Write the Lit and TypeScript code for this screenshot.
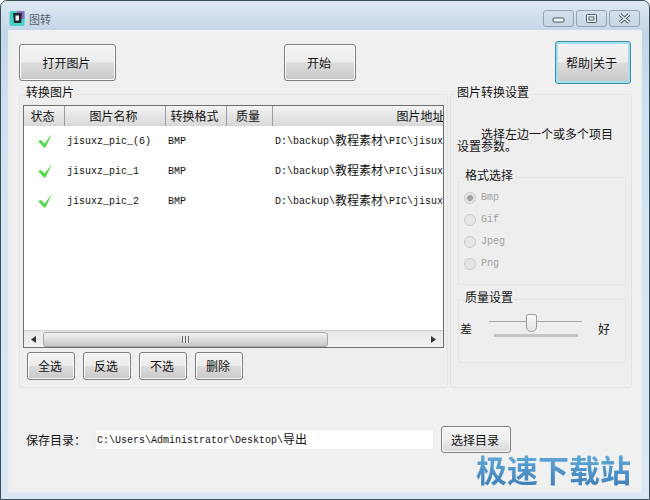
import { LitElement, html, css } from "lit";
import { customElement } from "lit/decorators.js";

const CJK = /([\u3000-\u9fff]+)/;
const mixed = (text: string) =>
  text.split(CJK).map((part) => (CJK.test(part) ? html`<span class="cjk">${part}</span>` : part));

const rows = [
  ["jisuxz_pic_(6)", "D:\\backup\\教程素材\\PIC\\jisuxz_pic_(6).bmp"],
  ["jisuxz_pic_1", "D:\\backup\\教程素材\\PIC\\jisuxz_pic_1.bmp"],
  ["jisuxz_pic_2", "D:\\backup\\教程素材\\PIC\\jisuxz_pic_2.bmp"],
];

@customElement("app-root")
export class AppRoot extends LitElement {
  static styles = css`
    :host {
      display: block;
      width: 650px;
      height: 500px;
      font: 12px "Noto Sans CJK SC", sans-serif;
      color: #111;
      background: #fff;
    }
    * { box-sizing: border-box; }
    .cjk { font: 12px/12px "Noto Sans CJK SC", sans-serif; position: relative; top: 1px; }
    .mono { font: 10px/12px "Liberation Mono", "Noto Sans CJK SC", monospace; white-space: nowrap; }

    .wrap { position: relative; width: 650px; height: 500px; }
    .frame {
      width: 650px;
      height: 500px;
      display: flex;
      flex-direction: column;
      padding: 0 7px 6px 7px;
      border: 1px solid #3a4f58;
      border-radius: 7px 7px 0 0;
      background: linear-gradient(180deg, #dfe9f2 0, #c3d6e8 30px, #cfe1f2 120px, #dbe8f4 100%);
    }
    .title { height: 29px; flex: none; display: flex; align-items: flex-start; }
    .logo { width: 16px; height: 16px; margin: 9px 0 0 1px; }
    .title-text { margin: 11px 0 0 4px; font-size: 11px; line-height: 14px; color: #5a6068; }
    .ctl { margin-left: auto; display: flex; gap: 2px; margin-top: 9px; margin-right: 2px; }
    .ctl span {
      width: 31px; height: 17px; display: flex; align-items: center; justify-content: center;
      border: 1px solid #93a3b6; border-radius: 3px;
      background: linear-gradient(180deg, #d5e0eb, #c6d5e4);
    }
    .ctl svg { width: 15px; height: 11px; }

    .content {
      flex: 1;
      background: #f0f0f0;
      padding-top: 11px;
      border: 1px solid #e8eef3;
      border-width: 0 1px 1px 1px;
    }
    .top { display: flex; align-items: center; height: 43px; }

    .btn {
      display: flex; align-items: center; justify-content: center;
      padding-right: 2px;
      border: 1px solid #7f7f7f;
      border-radius: 3px;
      background: linear-gradient(180deg, #f3f3f3 0, #ececec 48%, #dcdcdc 52%, #c8c8c8 100%);
      box-shadow: inset 0 0 0 1px #fbfbfb;
      font-size: 12px;
      line-height: 14px;
      color: #111;
    }
    .open { width: 97px; height: 37px; margin-left: 10px; }
    .start { width: 72px; height: 37px; margin-left: 168px; }
    .help {
      width: 76px; height: 43px; margin-left: 199px;
      border: 1px solid #3f8ba0;
      box-shadow: inset 0 0 0 2px #9ee0f2;
      padding-right: 3px;
    }

    .panels { display: flex; margin: 10px 0 0 10px; gap: 2px; }
    .group { position: relative; border: 1px solid #e3e3e3; border-radius: 3px; background: #eeeeee; }
    .group > .label {
      position: absolute; left: 5px; top: -10px; line-height: 13px; background: #f0f0f0; padding: 0 1px; white-space: nowrap;
    }
    .left { width: 429px; height: 294px; padding: 10px 3px 0 3px; }
    .right { width: 182px; height: 294px; padding: 0 6px 0 6px; }

    .table {
      width: 421px; height: 243px;
      border: 1px solid #6e6e6e;
      background: #fff;
      display: flex; flex-direction: column; overflow: hidden;
    }
    .head, .row { display: grid; grid-template-columns: 41px 101px 61px 46px 296px; flex: none; }
    .head { height: 20px; background: linear-gradient(180deg, #f4f4f4, #e4e4e4 55%, #d8d8d8); }
    .head div { text-align: center; line-height: 19px; border-right: 1px solid #9c9c9c; white-space: nowrap; padding-right: 3px; }
    .head div:last-child { padding-right: 0; }
    .row { height: 30px; align-items: center; }
    .row .name, .row .fmt { padding: 2px 0 0 2px; }
    .row .path { grid-column: 5; padding: 0 0 2px 2px; }
    .check { width: 16px; height: 16px; margin-left: 13px; }
    .spacer { flex: 1; }

    .scroll {
      height: 17px; flex: none; display: flex; align-items: center;
      background: linear-gradient(180deg, #e8e8e8, #f2f2f2);
      border-top: 1px solid #cfcfcf;
    }
    .arrow { width: 19px; height: 100%; display: flex; align-items: center; justify-content: center; flex: none; }
    .arrow svg { width: 5px; height: 7px; }
    .thumb {
      width: 285px; height: 15px;
      display: flex; align-items: center; justify-content: center;
      border: 1px solid #a8a8a8; border-radius: 3px;
      background: linear-gradient(180deg, #f2f2f2, #dcdcdc 50%, #c8c8c8);
    }
    .grip { width: 8px; height: 7px; background: repeating-linear-gradient(90deg, #666 0 1px, #e8e8e8 1px 3px); }
    .track { flex: 1; }

    .actions { display: flex; gap: 8px; margin: 4px 0 0 4px; }
    .actions .btn { width: 48px; height: 28px; }

    .hint { margin-top: 33px; line-height: 12px; }
    .hint .a { padding-left: 24px; }
    .sub { position: relative; width: 168px; margin-left: 1px; border: 1px solid #e4e4e4; border-radius: 3px; background: #eeeeee; }
    .sub > .label { position: absolute; left: 5px; top: -10px; line-height: 13px; background: #f0f0f0; padding: 0 1px; }
    .format { height: 108px; margin-top: 25px; padding: 9px 0 0 5px; }
    .radio { display: flex; align-items: center; height: 22px; gap: 5px; color: #a0a0a0; }
    .dot {
      width: 12px; height: 12px; border-radius: 50%;
      border: 1px solid #c8c8c8; background: #e6e6e6;
      display: flex; align-items: center; justify-content: center;
    }
    .dot.on::after { content: ""; width: 6px; height: 6px; border-radius: 50%; background: #a2a2a2; }
    .quality { height: 64px; margin-top: 14px; display: flex; align-items: flex-start; padding: 21px 0 0 1px; }
    .quality .word { line-height: 16px; }
    .slider { position: relative; width: 93px; height: 26px; margin: -7px 16px 0 17px; }
    .groove { position: absolute; left: 0; right: 0; top: 7px; height: 1px; background: #a8a8a8; }
    .handle {
      position: absolute; left: 37px; top: 0; width: 11px; height: 18px;
      border: 1px solid #9a9a9a; border-radius: 2px 2px 5px 5px;
      background: linear-gradient(180deg, #fafafa, #e2e2e2);
    }
    .ticks { position: absolute; left: 5px; right: 4px; top: 20px; height: 3px; background: #c4c4c4; }

    .save { display: flex; align-items: center; margin: 38px 0 0 17px; height: 27px; }
    .save .cap { width: 69px; }
    .input { width: 339px; height: 21px; background: #fff; border: 1px solid #ececec; padding-left: 1px; line-height: 21px; }
    .save .btn { width: 70px; height: 27px; margin-left: 7px; background: linear-gradient(180deg, #f6f6f6, #eeeeee 48%, #d8d8d8); }

    .watermark {
      position: absolute; left: 476px; top: 451px;
      font: 700 31px/36px "Noto Sans CJK SC", sans-serif;
      white-space: nowrap;
      background: linear-gradient(180deg, #62aedd, #3f7fb8);
      -webkit-background-clip: text; background-clip: text; color: transparent;
    }
  `;

  render() {
    return html`<div class="wrap"><div class="frame">
      <div class="title">
        <svg class="logo" viewBox="0 0 16 16">
          <rect x="0.5" y="1" width="15" height="15" rx="2" fill="#45d0c8"/>
          <rect x="8" y="1" width="7.5" height="8" fill="#8a6fb8"/>
          <path d="M4 3 H13 L12 13 H5 Z" fill="#22262c"/>
          <rect x="6.5" y="5.5" width="3.5" height="5" fill="#f2f4f6"/>
        </svg>
        <div class="title-text">图转</div>
        <div class="ctl">
          <span><svg viewBox="0 0 15 11"><rect x="2" y="5" width="11" height="4" rx="1" fill="#f2f5f8" stroke="#4c5a68"/></svg></span>
          <span><svg viewBox="0 0 15 11"><rect x="2.5" y="1.5" width="10" height="8" rx="1" fill="#eef2f6" stroke="#4c5a68"/><rect x="5" y="4" width="5" height="3" fill="none" stroke="#4c5a68"/></svg></span>
          <span><svg viewBox="0 0 15 11"><path d="M3 1.5 L12 9.5 M12 1.5 L3 9.5" stroke="#4c5a68" stroke-width="3.4"/><path d="M3 1.5 L12 9.5 M12 1.5 L3 9.5" stroke="#f0f3f6" stroke-width="1.6"/></svg></span>
        </div>
      </div>
      <div class="content">
        <div class="top">
          <div class="btn open">打开图片</div>
          <div class="btn start">开始</div>
          <div class="btn help">帮助|关于</div>
        </div>
        <div class="panels">
          <div class="group left">
            <div class="label">转换图片</div>
            <div class="table">
              <div class="head">
                <div>状态</div><div>图片名称</div><div>转换格式</div><div>质量</div><div>图片地址</div>
              </div>
              ${rows.map(
                ([name, path]) => html`<div class="row">
                  <svg class="check" viewBox="0 0 16 16"><path d="M1 8 L4 7 L7.5 10.5 L15 1 L8.5 14.5 L7 14.5 Z" fill="#55d64c"/></svg>
                  <div class="name mono">${name}</div>
                  <div class="fmt mono">BMP</div>
                  <div class="path mono">${mixed(path)}</div>
                </div>`
              )}
              <div class="spacer"></div>
              <div class="scroll">
                <div class="arrow"><svg viewBox="0 0 5 7"><path d="M5 0 L0 3.5 L5 7 Z" fill="#333"/></svg></div>
                <div class="thumb"><div class="grip"></div></div>
                <div class="track"></div>
                <div class="arrow"><svg viewBox="0 0 5 7"><path d="M0 0 L5 3.5 L0 7 Z" fill="#333"/></svg></div>
              </div>
            </div>
            <div class="actions">
              <div class="btn">全选</div><div class="btn">反选</div><div class="btn">不选</div><div class="btn">删除</div>
            </div>
          </div>
          <div class="group right">
            <div class="label">图片转换设置</div>
            <div class="hint"><div class="a">选择左边一个或多个项目</div><div>设置参数。</div></div>
            <div class="sub format">
              <div class="label">格式选择</div>
              ${["Bmp", "Gif", "Jpeg", "Png"].map(
                (t, i) => html`<div class="radio"><span class="dot ${i === 0 ? "on" : ""}"></span><span class="mono">${t}</span></div>`
              )}
            </div>
            <div class="sub quality">
              <div class="label">质量设置</div>
              <div class="word">差</div>
              <div class="slider"><div class="groove"></div><div class="handle"></div><div class="ticks"></div></div>
              <div class="word">好</div>
            </div>
          </div>
        </div>
        <div class="save">
          <div class="cap">保存目录：</div>
          <div class="input mono">${mixed("C:\\Users\\Administrator\\Desktop\\导出")}</div>
          <div class="btn">选择目录</div>
        </div>
      </div>
    </div>
    <div class="watermark">极速下载站</div></div>`;
  }
}
